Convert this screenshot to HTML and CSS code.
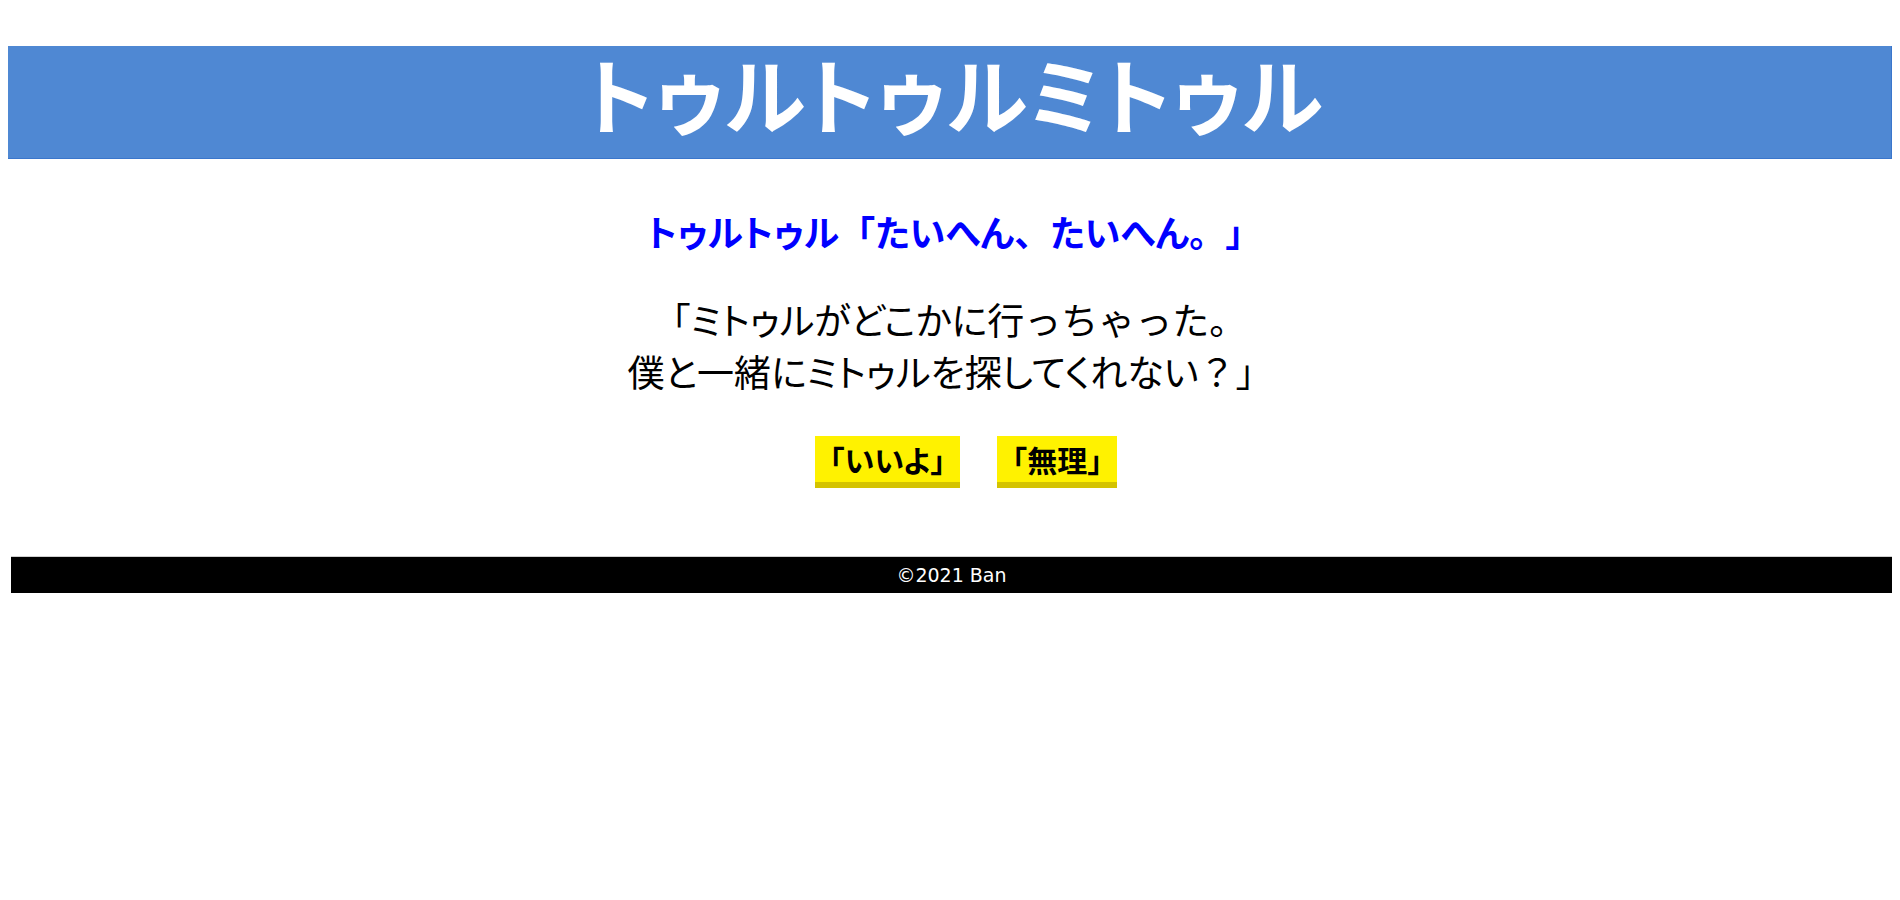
FILE: index.html
```html
<!DOCTYPE html>
<html lang="ja">
<head>
<meta charset="utf-8">
<title>トゥルトゥルミトゥル</title>
<link rel="stylesheet" href="styles.css">
</head>
<body>
<header class="site-header">
  <h1 class="site-title">トゥルトゥルミトゥル</h1>
</header>
<main class="scene">
  <h2 class="speaker">トゥルトゥル<span class="fw">「</span>たいへん<span class="fw">、</span>たいへん<span class="fw">。」</span></h2>
  <p class="line"><span class="fw">「</span>ミトゥルがどこかに行<span class="fw">っちゃった。</span><br>僕と一緒にミトゥルを探してくれない<span class="fw">？」</span></p>
  <div class="choices">
    <a class="choice" href="#"><span class="fw">「</span>いいよ<span class="fw">」</span></a>
    <a class="choice" href="#"><span class="fw">「</span>無理<span class="fw">」</span></a>
  </div>
</main>
<footer class="site-footer">©2021 Ban</footer>
</body>
</html>
```

FILE: styles.css
```css
body {
  margin: 8px;
  font-family: "Noto Sans CJK JP", "Noto Sans", sans-serif;
  font-feature-settings: "palt";
  text-spacing-trim: space-all;
  background: #ffffff;
  color: #000000;
}

.fw {
  font-feature-settings: normal;
}

.site-header {
  margin-top: 38px;
  height: 112px;
  box-sizing: content-box;
  background: #4f88d3;
  border-right: 1px solid #3a76cc;
  border-bottom: 1px solid #3a76cc;
  display: flex;
  align-items: center;
  justify-content: center;
}

.site-title {
  margin: 0 0 20px 8px;
  color: #ffffff;
  font-size: 83px;
  font-weight: 700;
  line-height: 1;
}

.scene {
  display: flex;
  flex-direction: column;
  align-items: center;
}

.speaker {
  margin: 48px 0 0 8px;
  color: #0000ff;
  font-size: 36px;
  line-height: 48px;
  font-weight: 700;
}

.line {
  margin: 38px 0 0;
  font-size: 37px;
  line-height: 52px;
  text-align: center;
}

.choices {
  margin: 39px 0 0 32px;
  display: flex;
  gap: 37px;
}

.choice {
  display: block;
  background: #fff200;
  border-bottom: 6px solid #d4c300;
  color: #000000;
  text-decoration: none;
  font-size: 30px;
  font-weight: 700;
  line-height: 46px;
  padding: 0;
}

.site-footer {
  margin: 68px 0 0 3px;
  height: 36px;
  border-top: 1px solid #d0d0d0;
  background: #000000;
  color: #ffffff;
  font-family: "DejaVu Sans", sans-serif;
  font-size: 19px;
  line-height: 36px;
  text-align: center;
}
```
